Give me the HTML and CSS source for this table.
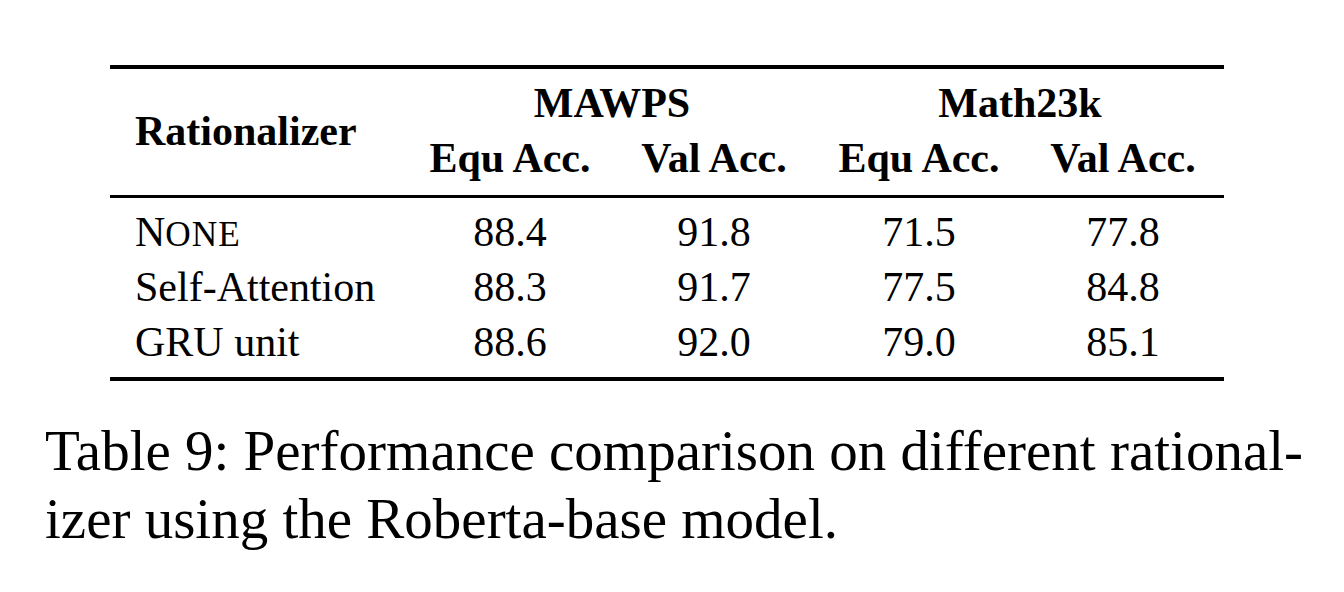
FILE: index.html
```html
<!DOCTYPE html>
<html lang="en">
<head>
<meta charset="utf-8">
<title>Table 9</title>
<link rel="stylesheet" href="styles.css">
</head>
<body class="doc">
<div class="sheet">
  <div class="tbl">
    <div class="thead grid">
      <div class="cell lab span-rows bold">Rationalizer</div>
      <div class="cell span-2 bold">MAWPS</div>
      <div class="cell span-2 bold">Math23k</div>
      <div class="cell bold">Equ Acc.</div>
      <div class="cell bold">Val Acc.</div>
      <div class="cell bold">Equ Acc.</div>
      <div class="cell bold">Val Acc.</div>
    </div>
    <div class="tbody grid">
      <div class="cell lab">N<span class="smcp">ONE</span></div>
      <div class="cell">88.4</div><div class="cell">91.8</div><div class="cell">71.5</div><div class="cell">77.8</div>
      <div class="cell lab">Self-Attention</div>
      <div class="cell">88.3</div><div class="cell">91.7</div><div class="cell">77.5</div><div class="cell">84.8</div>
      <div class="cell lab">GRU unit</div>
      <div class="cell">88.6</div><div class="cell">92.0</div><div class="cell">79.0</div><div class="cell">85.1</div>
    </div>
  </div>
  <div class="cap">
    <div class="cl cl-just">Table 9: Performance comparison on different rational-</div>
    <div class="cl">izer using the Roberta-base model.</div>
  </div>
</div>
</body>
</html>
```
FILE: styles.css
```css
* {
  font-family: "Liberation Serif", serif;
}
.doc {
  margin: 0;
  background: #fff;
  color: #000;
}
.sheet {
  padding-top: 65px;
}
.tbl {
  margin-left: 110px;
  width: 1114px;
  border-top: 4px solid #000;
  border-bottom: 4px solid #000;
  font-size: 42px;
  line-height: 55px;
}
.grid {
  display: grid;
  grid-template-columns: 298px 204px 204px 206px 202px;
  grid-auto-rows: 55px;
}
.thead {
  padding: 7px 0 9px;
  border-bottom: 3px solid #000;
}
.tbody {
  padding: 7px 0;
}
.cell {
  text-align: center;
  white-space: nowrap;
}
.bold { font-weight: bold; }
.lab {
  text-align: left;
  padding-left: 25px;
}
.span-rows {
  grid-row: span 2;
  align-self: center;
}
.span-2 { grid-column: span 2; }
.smcp {
  font-size: 0.84em;
  letter-spacing: 1px;
}
.cap {
  margin: 36px 0 0 45px;
  width: 1258px;
  font-size: 57px;
  line-height: 68px;
}
.cl { white-space: nowrap; }
.cl-just {
  text-align: justify;
  text-align-last: justify;
  white-space: normal;
}
```
